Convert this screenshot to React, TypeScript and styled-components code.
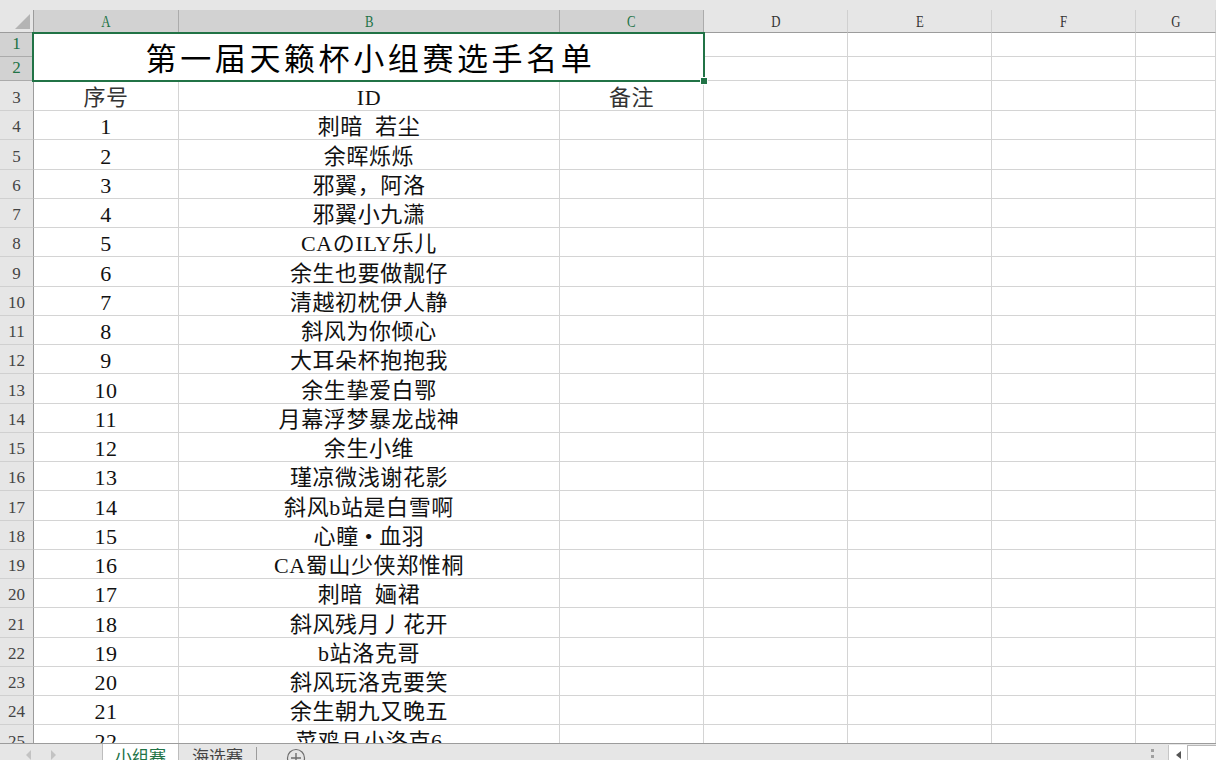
import React from "react";
import styled, { createGlobalStyle, css } from "styled-components";

const GlobalStyle = createGlobalStyle`
  html, body {
    margin: 0;
    padding: 0;
    background: #e6e6e6;
    overflow: hidden;
  }
`;

const GREEN = "#217346";
const GRID = "#d4d4d4";
const CELL_FONT = `"Liberation Serif", "Noto Sans CJK SC", serif`;

const Window = styled.div`
    width: 1216px;
    height: 760px;
    display: flex;
    flex-direction: column;
    background: #e6e6e6;
    overflow: hidden;
`;

const TopBand = styled.div`
    height: 10px;
    flex: 0 0 auto;
    background: #e6e6e6;
`;

const Sheet = styled.div`
    flex: 1 1 auto;
    overflow: hidden;
    display: grid;
    grid-template-columns: 34px 145px 381px 144px 144px 144px 144px 80px;
    grid-template-rows: 23px 24px 24px 30px repeat(22, 29.25px);
    background: #fff;
`;

const Corner = styled.div`
    background: #e6e6e6;
    border-right: 1px solid #9c9c9c;
    border-bottom: 1px solid #9c9c9c;
    position: relative;
    &::after {
        content: "";
        position: absolute;
        right: 3px;
        bottom: 3px;
        width: 0;
        height: 0;
        border-left: 15px solid transparent;
        border-bottom: 15px solid #b4b4b4;
    }
`;

const ColHead = styled.div<{ $active?: boolean }>`
    display: flex;
    align-items: flex-end;
    justify-content: center;
    padding-bottom: 1px;
    box-sizing: border-box;
    font-family: "Liberation Serif", serif;
    font-size: 16px;
    border-right: 1px solid ${({ $active }) => ($active ? "#ababab" : "#d0d0d0")};
    border-bottom: 1px solid #9c9c9c;
    background: ${({ $active }) => ($active ? "#d2d2d2" : "#e6e6e6")};
    color: ${({ $active }) => ($active ? GREEN : "#333")};
    span {
        display: inline-block;
        transform: scaleX(0.8);
    }
`;

const RowHead = styled.div<{ $active?: boolean }>`
    display: flex;
    align-items: flex-end;
    justify-content: center;
    padding-bottom: 2px;
    box-sizing: border-box;
    font-family: "Liberation Serif", serif;
    font-size: 17px;
    border-right: 1px solid #9c9c9c;
    border-bottom: 1px solid ${({ $active }) => ($active ? "#ababab" : "#d0d0d0")};
    background: ${({ $active }) => ($active ? "#d2d2d2" : "#e6e6e6")};
    color: ${({ $active }) => ($active ? GREEN : "#444")};
`;

const Cell = styled.div<{ $dim?: boolean }>`
    display: flex;
    align-items: flex-end;
    justify-content: center;
    box-sizing: border-box;
    border-right: 1px solid ${GRID};
    border-bottom: 1px solid ${GRID};
    font-family: ${CELL_FONT};
    font-size: 22px;
    line-height: 25px;
    letter-spacing: 0.6px;
    white-space: pre;
    color: ${({ $dim }) => ($dim ? "#333" : "#111")};
`;

const TitleCell = styled.div`
    grid-column: 2 / 5;
    grid-row: 2 / 4;
    position: relative;
    display: flex;
    align-items: center;
    justify-content: center;
    padding-left: 4px;
    border-right: 1px solid ${GRID};
    border-bottom: 1px solid ${GRID};
    font-family: ${CELL_FONT};
    font-size: 31px;
    letter-spacing: 3.6px;
    color: #000;
    white-space: nowrap;
    &::after {
        content: "";
        position: absolute;
        left: -2px;
        top: -1px;
        right: -2px;
        bottom: -2px;
        border: 2px solid ${GREEN};
        pointer-events: none;
    }
`;

const FillHandle = styled.div`
    position: absolute;
    right: -5px;
    bottom: -5px;
    width: 6px;
    height: 6px;
    background: ${GREEN};
    border: 1px solid #fff;
    z-index: 2;
`;

const TabBar = styled.div`
    flex: 0 0 17px;
    height: 17px;
    display: flex;
    align-items: flex-start;
    border-top: 1px solid #9c9c9c;
    background: #e6e6e6;
    overflow: hidden;
    box-sizing: border-box;
`;

const NavArea = styled.div`
    width: 102px;
    display: flex;
    gap: 20px;
    padding: 6px 0 0 26px;
    box-sizing: border-box;
`;

const NavArrow = styled.span<{ $dir: "left" | "right" }>`
    width: 0;
    height: 0;
    border-top: 5px solid transparent;
    border-bottom: 5px solid transparent;
    ${({ $dir }) =>
        $dir === "left"
            ? css`border-right: 5px solid #c3c3c3;`
            : css`border-left: 5px solid #c3c3c3;`}
`;

const Tab = styled.div<{ $active?: boolean }>`
    height: 30px;
    margin-top: -1px;
    padding: 0 12px 0 12px;
    font-family: "Noto Sans CJK SC", sans-serif;
    font-size: 17px;
    line-height: 26px;
    color: ${({ $active }) => ($active ? GREEN : "#444")};
    background: ${({ $active }) => ($active ? "#fff" : "transparent")};
    border-left: 1px solid ${({ $active }) => ($active ? "#bdbdbd" : "transparent")};
    border-right: 1px solid ${({ $active }) => ($active ? "#bdbdbd" : "transparent")};
    box-sizing: border-box;
`;

const TabSep = styled.span`
    width: 1px;
    height: 14px;
    margin-top: 3px;
    background: #9c9c9c;
`;

const AddSheet = styled.svg`
    margin: 4px 0 0 29px;
    flex: 0 0 auto;
`;

const Spacer = styled.div`
    flex: 1 1 auto;
`;

const Dots = styled.div`
    margin: 5px 14px 0 0;
    display: flex;
    flex-direction: column;
    gap: 3px;
    span {
        width: 3px;
        height: 3px;
        background: #a0a0a0;
    }
`;

const ScrollBtn = styled.div`
    width: 19px;
    height: 20px;
    margin-top: 1px;
    background: #fff;
    border-left: 1px solid #c6c6c6;
    display: flex;
    justify-content: center;
    padding-top: 6px;
    box-sizing: border-box;
    &::before {
        content: "";
        width: 0;
        height: 0;
        border-top: 4px solid transparent;
        border-bottom: 4px solid transparent;
        border-right: 5px solid #555;
    }
`;

const ScrollTrack = styled.div`
    width: 29px;
    height: 20px;
    margin-top: 1px;
    background: #fff;
    border-left: 1px solid #b8b8b8;
    border-top: 1px solid #b8b8b8;
    box-sizing: border-box;
`;

const players = [
    "刺暗  若尘", "余晖烁烁", "邪翼，阿洛", "邪翼小九潇", "CAのILY乐儿",
    "余生也要做靓仔", "清越初枕伊人静", "斜风为你倾心", "大耳朵杯抱抱我", "余生挚爱白鄂",
    "月幕浮梦暴龙战神", "余生小维", "瑾凉微浅谢花影", "斜风b站是白雪啊", "心瞳 • 血羽",
    "CA蜀山少侠郑惟桐", "刺暗  婳裙", "斜风残月丿花开", "b站洛克哥", "斜风玩洛克要笑",
    "余生朝九又晚五", "菜鸡且小洛克6",
];

const columns = ["A", "B", "C", "D", "E", "F", "G"];

const EmptyCells: React.FC<{ count: number }> = ({ count }) => (
    <>
        {Array.from({ length: count }, (_, i) => <Cell key={i} />)}
    </>
);

export default function App() {
    return (
        <>
            <GlobalStyle />
            <Window>
                <TopBand />
                <Sheet>
                    <Corner />
                    {columns.map((c, i) => (
                        <ColHead key={c} $active={i < 3}><span>{c}</span></ColHead>
                    ))}

                    <RowHead $active>1</RowHead>
                    <TitleCell>
                        第一届天籁杯小组赛选手名单
                        <FillHandle />
                    </TitleCell>
                    <EmptyCells count={4} />
                    <RowHead $active>2</RowHead>
                    <EmptyCells count={4} />

                    <RowHead>3</RowHead>
                    <Cell $dim>序号</Cell>
                    <Cell>ID</Cell>
                    <Cell $dim>备注</Cell>
                    <EmptyCells count={4} />

                    {players.map((name, i) => (
                        <React.Fragment key={i}>
                            <RowHead>{i + 4}</RowHead>
                            <Cell>{i + 1}</Cell>
                            <Cell>{name}</Cell>
                            <EmptyCells count={5} />
                        </React.Fragment>
                    ))}
                </Sheet>
                <TabBar>
                    <NavArea>
                        <NavArrow $dir="left" />
                        <NavArrow $dir="right" />
                    </NavArea>
                    <Tab $active>小组赛</Tab>
                    <Tab>海选赛</Tab>
                    <TabSep />
                    <AddSheet width="20" height="20" viewBox="0 0 20 20">
                        <circle cx="10" cy="10" r="8.5" fill="none" stroke="#6e6e6e" strokeWidth="1.2" />
                        <path d="M10 5v10M5 10h10" stroke="#6e6e6e" strokeWidth="1.4" />
                    </AddSheet>
                    <Spacer />
                    <Dots><span /><span /><span /></Dots>
                    <ScrollBtn />
                    <ScrollTrack />
                </TabBar>
            </Window>
        </>
    );
}
